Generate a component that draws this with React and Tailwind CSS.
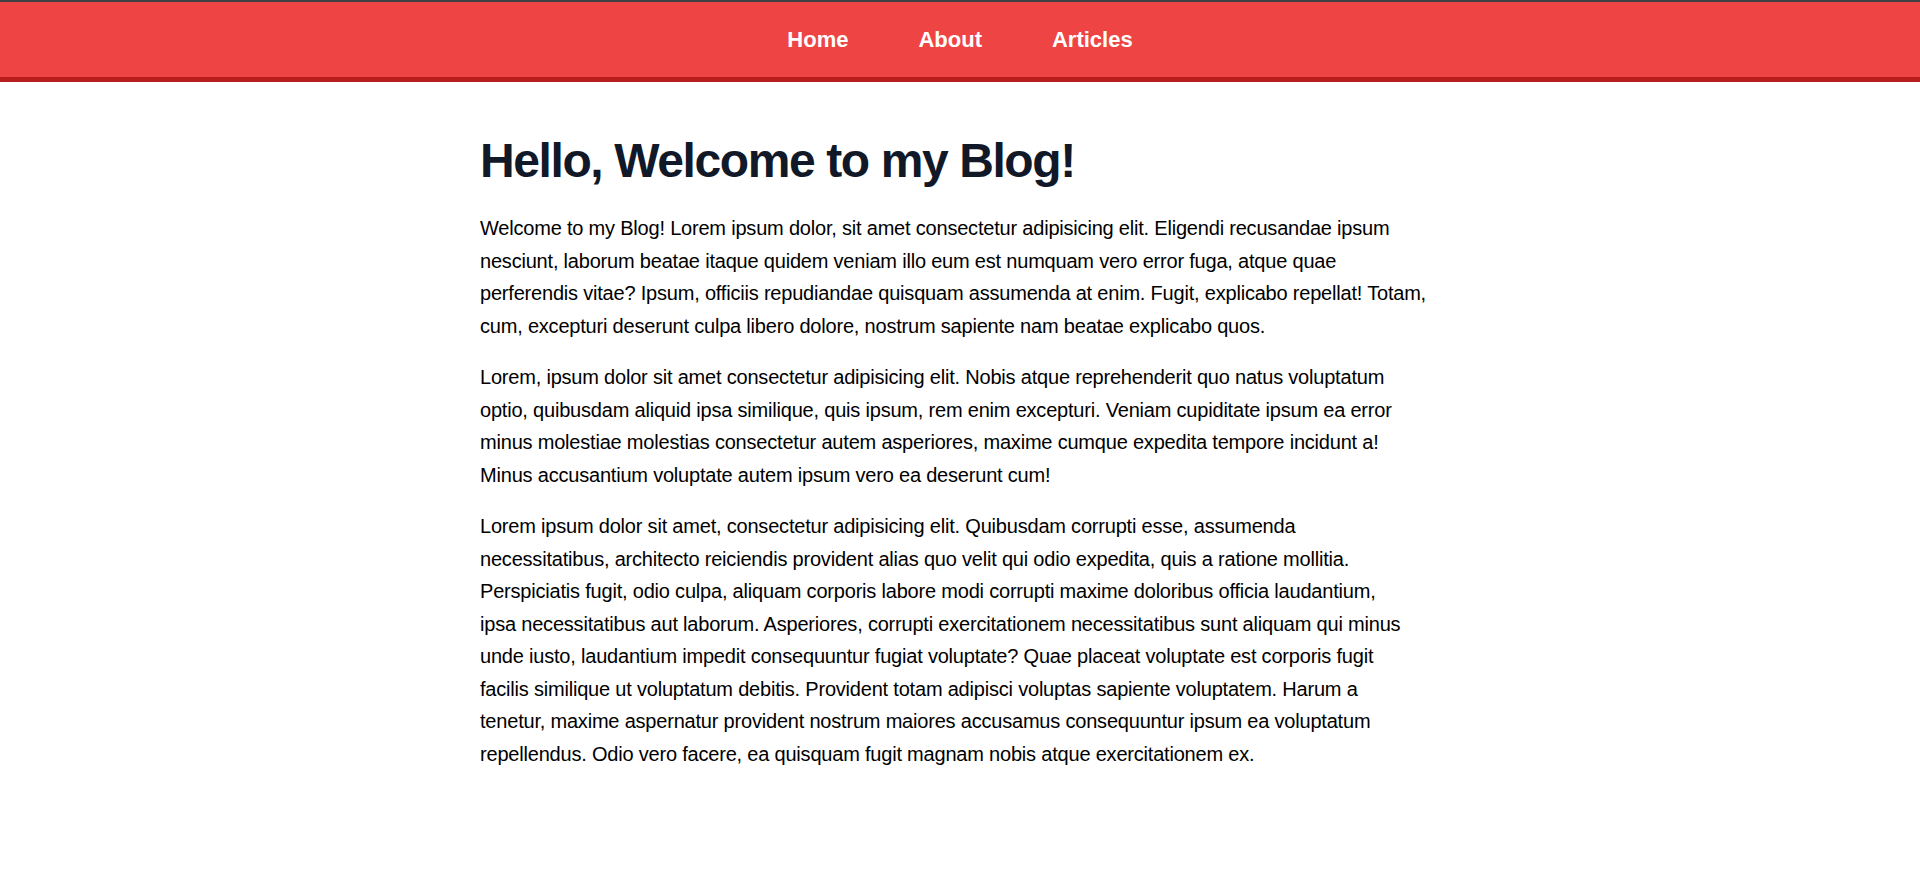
import React from "react";

// line breaks follow the reference layout
const paragraphs = [
  "Welcome to my Blog! Lorem ipsum dolor, sit amet consectetur adipisicing elit. Eligendi recusandae ipsum\nnesciunt, laborum beatae itaque quidem veniam illo eum est numquam vero error fuga, atque quae\nperferendis vitae? Ipsum, officiis repudiandae quisquam assumenda at enim. Fugit, explicabo repellat! Totam,\ncum, excepturi deserunt culpa libero dolore, nostrum sapiente nam beatae explicabo quos.",
  "Lorem, ipsum dolor sit amet consectetur adipisicing elit. Nobis atque reprehenderit quo natus voluptatum\noptio, quibusdam aliquid ipsa similique, quis ipsum, rem enim excepturi. Veniam cupiditate ipsum ea error\nminus molestiae molestias consectetur autem asperiores, maxime cumque expedita tempore incidunt a!\nMinus accusantium voluptate autem ipsum vero ea deserunt cum!",
  "Lorem ipsum dolor sit amet, consectetur adipisicing elit. Quibusdam corrupti esse, assumenda\nnecessitatibus, architecto reiciendis provident alias quo velit qui odio expedita, quis a ratione mollitia.\nPerspiciatis fugit, odio culpa, aliquam corporis labore modi corrupti maxime doloribus officia laudantium,\nipsa necessitatibus aut laborum. Asperiores, corrupti exercitationem necessitatibus sunt aliquam qui minus\nunde iusto, laudantium impedit consequuntur fugiat voluptate? Quae placeat voluptate est corporis fugit\nfacilis similique ut voluptatum debitis. Provident totam adipisci voluptas sapiente voluptatem. Harum a\ntenetur, maxime aspernatur provident nostrum maiores accusamus consequuntur ipsum ea voluptatum\nrepellendus. Odio vero facere, ea quisquam fugit magnam nobis atque exercitationem ex.",
];

const links = ["Home", "About", "Articles"];

export default function App() {
  return (
    <div className="min-h-screen bg-white font-['Liberation_Sans',Arial,sans-serif]">
      <nav className="bg-[#ef4444] border-t-2 border-t-[#3f3f46] border-b-[5px] border-b-[#b91c1c]">
        <ul className="flex justify-center gap-[70px] h-[75px] items-center">
          {links.map((l) => (
            <li key={l}>
              <a href="#" className="text-white text-[22px] font-bold">
                {l}
              </a>
            </li>
          ))}
        </ul>
      </nav>
      <main className="max-w-[960px] mx-auto pt-[55px]">
        <h1 className="text-5xl font-bold text-[#111827] tracking-[-1.4px] mb-[27px]">
          Hello, Welcome to my Blog!
        </h1>
        {paragraphs.map((p, i) => (
          <p
            key={i}
            className="text-xl leading-relaxed text-black tracking-[-0.2px] whitespace-pre-line mb-[19px]"
          >
            {p}
          </p>
        ))}
      </main>
    </div>
  );
}
